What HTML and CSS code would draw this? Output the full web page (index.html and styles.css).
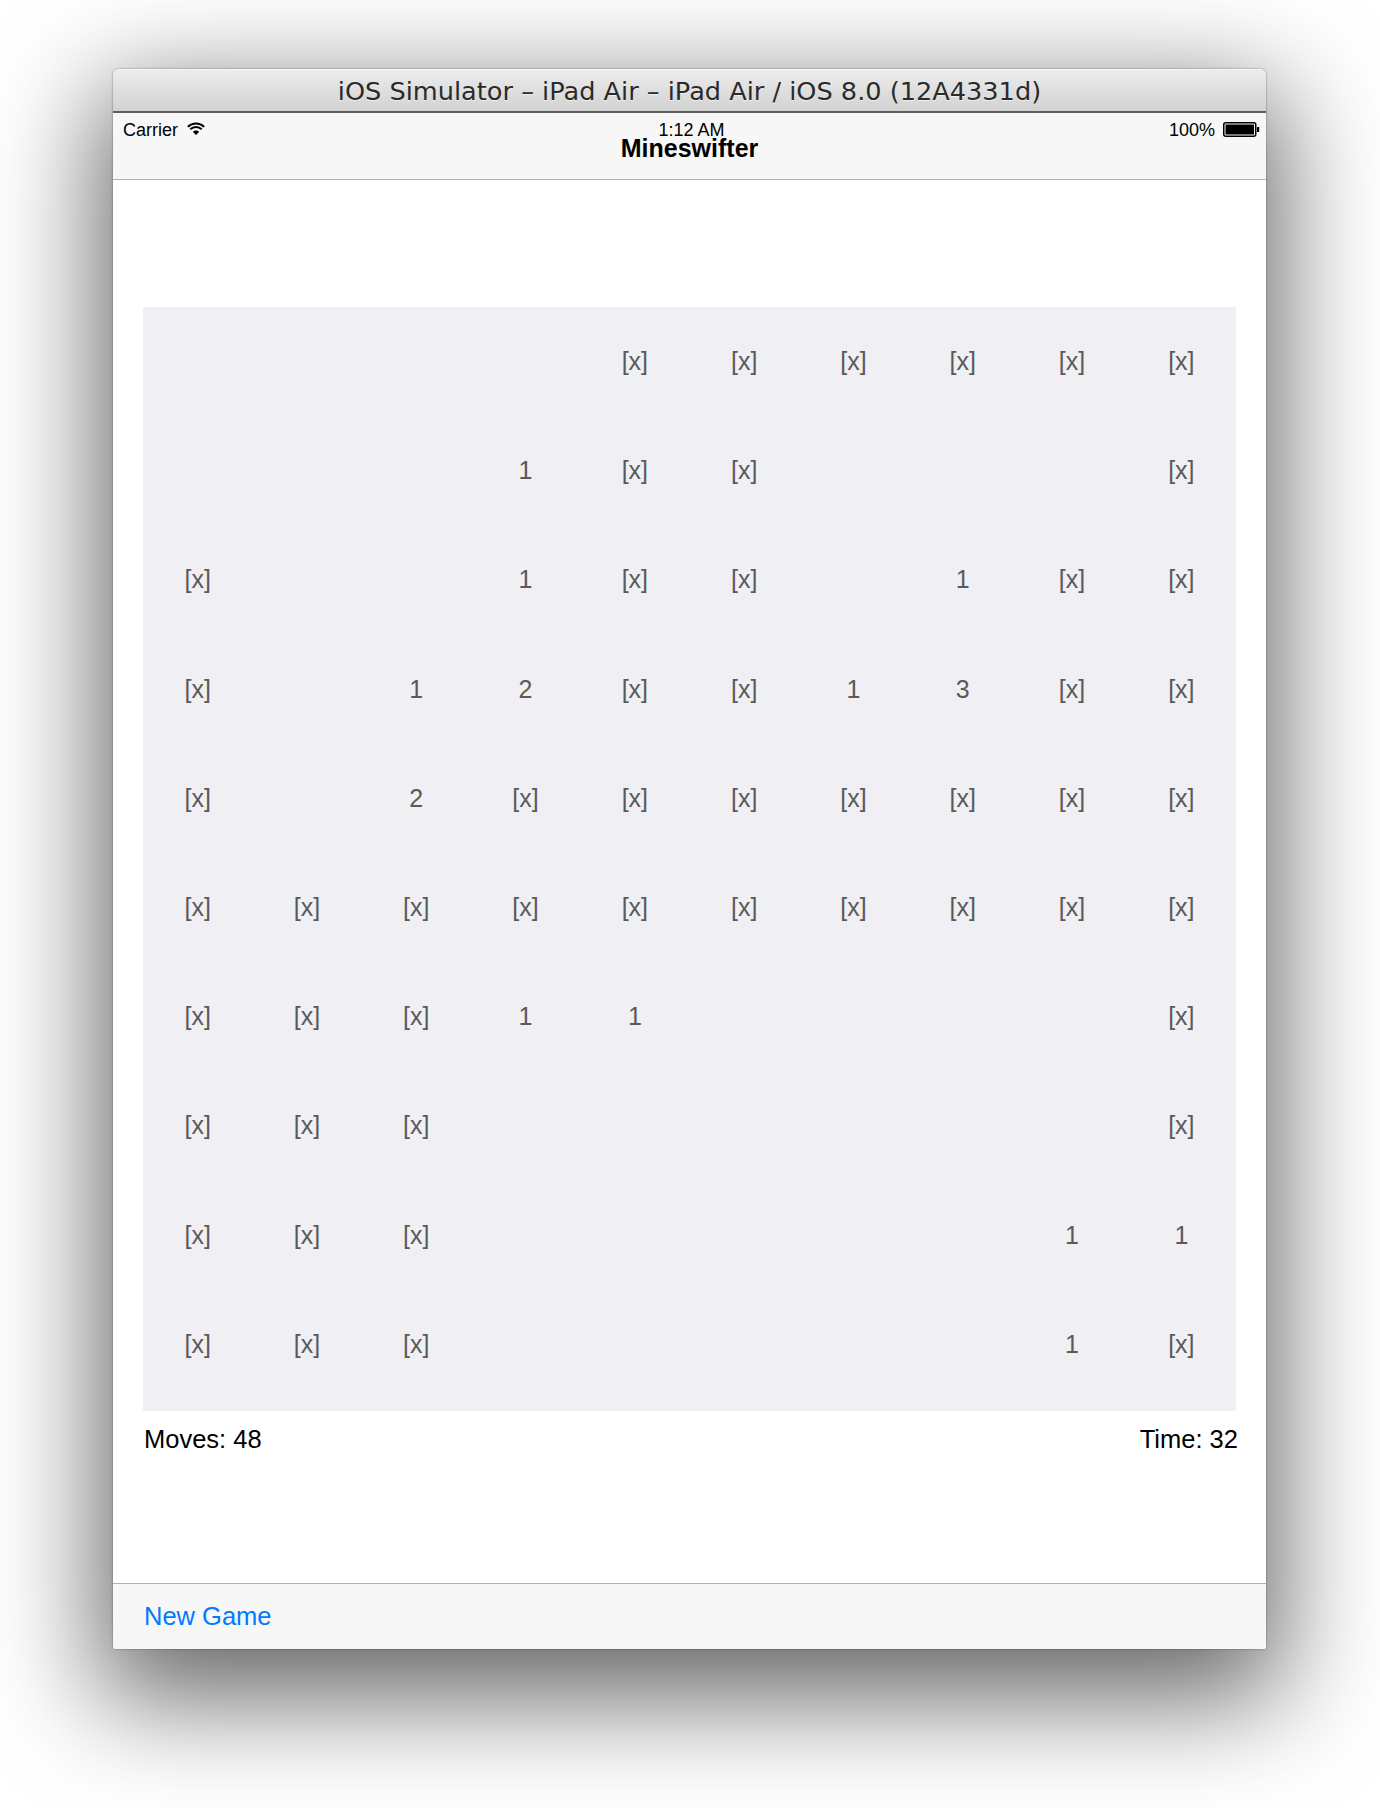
FILE: index.html
```html
<!DOCTYPE html>
<html>
<head>
<meta charset="utf-8">
<title>Mineswifter</title>
<link rel="stylesheet" href="styles.css">
</head>
<body>
<div class="stage">
  <div class="window">
    <div class="titlebar">iOS Simulator – iPad Air – iPad Air / iOS 8.0 (12A4331d)</div>
    <div class="screen">
      <div class="navbar">
        <div class="statusbar">
          <div class="sb-left">
            <span>Carrier</span>
            <svg class="wifi" width="18" height="13" viewBox="0 0 18 13">
              <path d="M9 13 L5.82 9.82 A4.5 4.5 0 0 1 12.18 9.82 Z" fill="#000"/>
              <path d="M3.34 7.34 A8 8 0 0 1 14.66 7.34" fill="none" stroke="#000" stroke-width="2.1"/>
              <path d="M0.87 4.87 A11.5 11.5 0 0 1 17.13 4.87" fill="none" stroke="#000" stroke-width="2.1"/>
            </svg>
          </div>
          <div class="sb-time">1:12 AM</div>
          <div class="sb-right">
            <span>100%</span>
            <svg class="battery" width="37" height="15" viewBox="0 0 37 15">
              <rect x="0.75" y="0.75" width="32" height="13.5" rx="2" fill="none" stroke="#000" stroke-width="1.5"/>
              <rect x="2.5" y="2.5" width="28.5" height="10" fill="#000"/>
              <rect x="34" y="5" width="2.2" height="5" rx="0.6" fill="#000"/>
            </svg>
          </div>
        </div>
        <div class="navtitle">Mineswifter</div>
      </div>
      <div class="content">
        <div class="board">
          <div class="cell"></div><div class="cell"></div><div class="cell"></div><div class="cell"></div><div class="cell">[x]</div><div class="cell">[x]</div><div class="cell">[x]</div><div class="cell">[x]</div><div class="cell">[x]</div><div class="cell">[x]</div>
          <div class="cell"></div><div class="cell"></div><div class="cell"></div><div class="cell">1</div><div class="cell">[x]</div><div class="cell">[x]</div><div class="cell"></div><div class="cell"></div><div class="cell"></div><div class="cell">[x]</div>
          <div class="cell">[x]</div><div class="cell"></div><div class="cell"></div><div class="cell">1</div><div class="cell">[x]</div><div class="cell">[x]</div><div class="cell"></div><div class="cell">1</div><div class="cell">[x]</div><div class="cell">[x]</div>
          <div class="cell">[x]</div><div class="cell"></div><div class="cell">1</div><div class="cell">2</div><div class="cell">[x]</div><div class="cell">[x]</div><div class="cell">1</div><div class="cell">3</div><div class="cell">[x]</div><div class="cell">[x]</div>
          <div class="cell">[x]</div><div class="cell"></div><div class="cell">2</div><div class="cell">[x]</div><div class="cell">[x]</div><div class="cell">[x]</div><div class="cell">[x]</div><div class="cell">[x]</div><div class="cell">[x]</div><div class="cell">[x]</div>
          <div class="cell">[x]</div><div class="cell">[x]</div><div class="cell">[x]</div><div class="cell">[x]</div><div class="cell">[x]</div><div class="cell">[x]</div><div class="cell">[x]</div><div class="cell">[x]</div><div class="cell">[x]</div><div class="cell">[x]</div>
          <div class="cell">[x]</div><div class="cell">[x]</div><div class="cell">[x]</div><div class="cell">1</div><div class="cell">1</div><div class="cell"></div><div class="cell"></div><div class="cell"></div><div class="cell"></div><div class="cell">[x]</div>
          <div class="cell">[x]</div><div class="cell">[x]</div><div class="cell">[x]</div><div class="cell"></div><div class="cell"></div><div class="cell"></div><div class="cell"></div><div class="cell"></div><div class="cell"></div><div class="cell">[x]</div>
          <div class="cell">[x]</div><div class="cell">[x]</div><div class="cell">[x]</div><div class="cell"></div><div class="cell"></div><div class="cell"></div><div class="cell"></div><div class="cell"></div><div class="cell">1</div><div class="cell">1</div>
          <div class="cell">[x]</div><div class="cell">[x]</div><div class="cell">[x]</div><div class="cell"></div><div class="cell"></div><div class="cell"></div><div class="cell"></div><div class="cell"></div><div class="cell">1</div><div class="cell">[x]</div>
        </div>
        <div class="stats">
          <span>Moves: 48</span>
          <span>Time: 32</span>
        </div>
      </div>
      <div class="toolbar">
        <span class="newgame">New Game</span>
      </div>
    </div>
  </div>
</div>
</body>
</html>
```
FILE: styles.css
```css
* { box-sizing: border-box; }
html, body {
  margin: 0;
  padding: 0;
  background: #ffffff;
}
body {
  font-family: "Liberation Sans", Arial, sans-serif;
  width: 1380px;
  height: 1808px;
  overflow: hidden;
}
.stage {
  padding: 69px 0 0 113px;
}
.window {
  width: 1153px;
  height: 1580px;
  display: flex;
  flex-direction: column;
  border-radius: 6px 6px 3px 3px;
  box-shadow: 0 36px 110px 14px rgba(0, 0, 0, 0.6), 0 0 2px rgba(0,0,0,0.5);
  background: #ffffff;
  overflow: hidden;
}
.titlebar {
  height: 44px;
  flex: none;
  background: linear-gradient(#ececec, #d2d2d2);
  border-top: 1px solid #f6f6f6;
  border-bottom: 2px solid #5e5e5e;
  display: flex;
  align-items: center;
  justify-content: center;
  font-family: "DejaVu Sans", sans-serif;
  font-size: 25.6px;
  color: #2a2a2a;
  text-shadow: 0 1px 0 rgba(255,255,255,0.6);
  padding-top: 1px;
}
.screen {
  flex: 1;
  display: flex;
  flex-direction: column;
  background: #ffffff;
}
.navbar {
  height: 67px;
  flex: none;
  background: #f7f7f7;
  border-bottom: 1px solid #b2b2b2;
  display: grid;
  grid-template: 1fr / 1fr;
}
.statusbar {
  grid-area: 1 / 1;
  height: 30px;
  display: flex;
  align-items: center;
  justify-content: space-between;
  padding: 3px 6px 0 10px;
  font-size: 18px;
  line-height: 1;
  color: #000;
}
.sb-left, .sb-right {
  flex: 1;
  display: flex;
  align-items: center;
  gap: 9px;
}
.sb-right { justify-content: flex-end; gap: 8px; }
.wifi { margin-top: -2px; }
.sb-time {
  flex: none;
  font-size: 18px;
  line-height: 1;
  align-self: flex-start;
  padding-top: 5px;
}
.navtitle {
  grid-area: 1 / 1;
  align-self: center;
  justify-self: center;
  font-size: 25px;
  line-height: 1;
  font-weight: bold;
  color: #000;
  padding-top: 4px;
}
.content {
  flex: 1;
  padding: 127px 30px 0 30px;
}
.board {
  background: #efeff4;
  display: grid;
  grid-template-columns: repeat(10, 1fr);
  grid-auto-rows: 109.2px;
  padding-bottom: 12px;
}
.cell {
  display: flex;
  align-items: center;
  justify-content: center;
  font-size: 25px;
  color: #5a5a5a;
}
.stats {
  display: flex;
  justify-content: space-between;
  margin-top: 13px;
  font-size: 25.5px;
  line-height: 30px;
  color: #000;
  margin-right: -2px;
  padding-left: 1px;
}
.toolbar {
  height: 66px;
  flex: none;
  background: #f7f7f7;
  border-top: 1px solid #b2b2b2;
  display: flex;
  align-items: center;
  padding-left: 31px;
}
.newgame {
  font-size: 25.5px;
  color: #007aff;
}
```
